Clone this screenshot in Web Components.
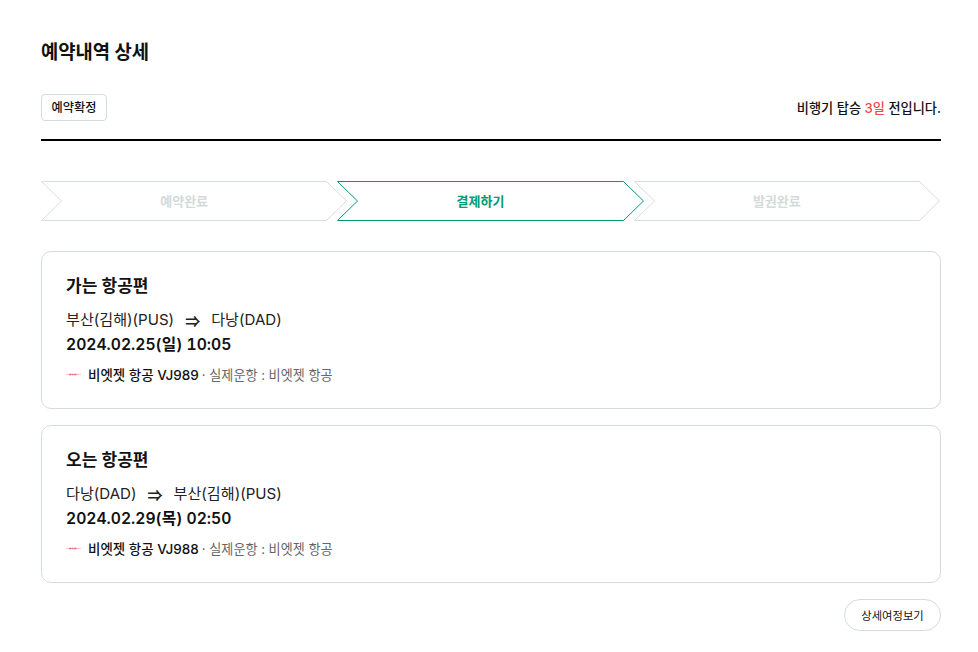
<!DOCTYPE html>
<html lang="ko">
<head>
<meta charset="utf-8">
<title>예약내역 상세</title>
<style>
  html, body { margin: 0; background: #fff; }
  body { font-family: Inter, "Noto Sans CJK KR", sans-serif; color: #111; }
</style>
</head>
<body>
<booking-detail>
  <booking-status slot="status" days="3"></booking-status>
  <step-bar slot="steps">
    <step-item label="예약완료"></step-item>
    <step-item label="결제하기" active></step-item>
    <step-item label="발권완료"></step-item>
  </step-bar>
  <flight-card title="가는 항공편" from="부산(김해)(PUS)" to="다낭(DAD)" date="2024.02.25(일) 10:05" flight="비엣젯 항공 VJ989" operator="실제운항 : 비엣젯 항공"></flight-card>
  <flight-card title="오는 항공편" from="다낭(DAD)" to="부산(김해)(PUS)" date="2024.02.29(목) 02:50" flight="비엣젯 항공 VJ988" operator="실제운항 : 비엣젯 항공"></flight-card>
</booking-detail>

<script>
class BookingDetail extends HTMLElement {
  constructor() {
    super();
    this.attachShadow({ mode: 'open' });
    this.shadowRoot.innerHTML = `
      <style>
        :host { display: block; padding: 40px 37px 0 41px; }
        h1 { margin: 0; font-size: 18.8px; line-height: 26px; font-weight: 700; color: #111; }
        .status-row {
          display: flex;
          justify-content: space-between;
          align-items: center;
          margin-top: 28px;
          padding-bottom: 18px;
          border-bottom: 2px solid #000;
        }
        .badge {
          display: block;
          box-sizing: border-box;
          height: 27px;
          width: 66px;
          text-align: center;
          border: 1px solid #d5dbdb;
          border-radius: 4px;
          font-size: 12.2px;
          font-weight: 500;
          line-height: 25px;
          color: #111;
        }
        .steps { margin-top: 40px; }
        .cards { display: flex; flex-direction: column; gap: 16px; margin-top: 30px; }
        .actions { display: flex; justify-content: flex-end; margin-top: 16px; }
        button {
          height: 32px;
          width: 97px;
          padding: 0;
          border: 1px solid #d5dbdb;
          border-radius: 16px;
          background: #fff;
          font: 400 11.3px Inter, "Noto Sans CJK KR", sans-serif;
          color: #111;
        }
      </style>
      <h1>예약내역 상세</h1>
      <div class="status-row">
        <span class="badge">예약확정</span>
        <slot name="status"></slot>
      </div>
      <div class="steps"><slot name="steps"></slot></div>
      <div class="cards"><slot></slot></div>
      <div class="actions"><button type="button">상세여정보기</button></div>
    `;
  }
}

class BookingStatus extends HTMLElement {
  constructor() {
    super();
    this.attachShadow({ mode: 'open' });
    this.shadowRoot.innerHTML = `
      <style>
        :host { display: block; font-size: 13.2px; font-weight: 500; color: #111; margin-top: -1px; }
        em { font-style: normal; color: #f0474f; }
      </style>
      비행기 탑승 <em>${this.getAttribute('days')}일</em> 전입니다.
    `;
  }
}

class StepBar extends HTMLElement {
  constructor() {
    super();
    this.attachShadow({ mode: 'open' });
    this.shadowRoot.innerHTML = `
      <style>
        :host { display: flex; height: 40px; }
        ::slotted(step-item:not(:first-child)) { margin-left: -11px; }
      </style>
      <slot></slot>
    `;
  }
}

class StepItem extends HTMLElement {
  constructor() {
    super();
    this.attachShadow({ mode: 'open' });
    const active = this.hasAttribute('active');
    // the active step is one pixel longer in the design
    const end = active ? 286.5 : 285.5;
    this.shadowRoot.innerHTML = `
      <style>
        :host {
          display: flex;
          position: relative;
          flex: 1 1 0;
          box-sizing: border-box;
          align-items: center;
          justify-content: center;
          height: 40px;
          padding: 0 21px 2px 0;
          font-size: 13px;
          font-weight: 700;
          color: ${active ? '#009b72' : '#d3dbda'};
        }
        :host([active]) { z-index: 1; }
        svg { position: absolute; left: 0; top: 0; overflow: visible; }
        span { position: relative; }
      </style>
      <svg width="307" height="40" viewBox="0 0 307 40" fill="none">
        <path d="M.5 .5H${end}L${end + 20} 20L${end} 39.500H.5L20.500 20Z" stroke="${active ? '#009b72' : '#d8dedd'}"/>
      </svg>
      <span>${this.getAttribute('label')}</span>
    `;
  }
}

class FlightCard extends HTMLElement {
  constructor() {
    super();
    this.attachShadow({ mode: 'open' });
    const a = (n) => this.getAttribute(n);
    this.shadowRoot.innerHTML = `
      <style>
        :host {
          display: block;
          box-sizing: border-box;
          height: 158px;
          padding: 22px 24px 0;
          border: 1px solid #d5dbdb;
          border-radius: 10px;
        }
        h2 { margin: 0; font-size: 17px; line-height: 24px; font-weight: 600; color: #111; }
        .route {
          display: flex;
          align-items: center;
          gap: 11px;
          margin-top: 11px;
          font-size: 15.1px;
          line-height: 22px;
          color: #222;
        }
        .route .arrow { font-family: "Noto Sans CJK KR", sans-serif; font-weight: 700; }
        .date {
          margin-top: 3px;
          font-size: 15.7px;
          line-height: 22px;
          font-weight: 600;
          font-variant-numeric: tabular-nums;
          color: #111;
        }
        .carrier {
          display: flex;
          align-items: center;
          margin-top: 9px;
          font-size: 13.1px;
          line-height: 20px;
          color: #666;
        }
        .carrier svg { margin: 0 7px 2px 0; }
        strong { font-size: 13.5px; font-weight: 500; color: #111; margin-right: 3px; }
      </style>
      <h2>${a('title')}</h2>
      <div class="route"><span>${a('from')}</span><span class="arrow">⇒</span><span>${a('to')}</span></div>
      <div class="date">${a('date')}</div>
      <div class="carrier">
        <svg width="15" height="3" viewBox="0 0 15 3" fill="none">
          <path d="M0 1.500H15" stroke="#f9c4ca" stroke-width="1"/>
          <path d="M3 1.500H11" stroke="#ef6a7a" stroke-width="1.500" stroke-dasharray="2 .5"/>
        </svg>
        <strong>${a('flight')}</strong>· ${a('operator')}
      </div>
    `;
  }
}

customElements.define('booking-detail', BookingDetail);
customElements.define('booking-status', BookingStatus);
customElements.define('step-bar', StepBar);
customElements.define('step-item', StepItem);
customElements.define('flight-card', FlightCard);
</script>
</body>
</html>
